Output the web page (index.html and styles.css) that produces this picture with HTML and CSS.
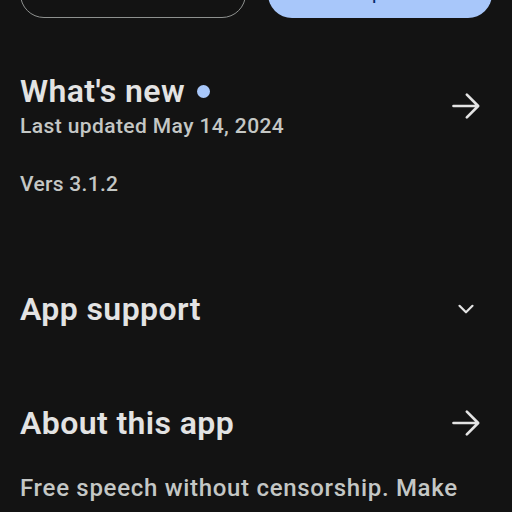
FILE: index.html
```html
<!DOCTYPE html>
<html lang="en">
<head>
  <meta charset="UTF-8">
  <meta name="viewport" content="width=device-width, initial-scale=1.0">
  <title>App details</title>
  <link rel="stylesheet" href="styles.css">
</head>
<body>
  <div class="page">
    <div class="actions">
      <button class="btn btn-outline">Uninstall</button>
      <button class="btn btn-filled">Open</button>
    </div>

    <section class="section whats-new">
      <div class="section-head">
        <div>
          <h2 class="section-title">What's new <span class="dot"></span></h2>
          <div class="section-sub">Last updated May 14, 2024</div>
        </div>
        <svg class="icon arrow" viewBox="0 0 24 24" width="40" height="40">
          <path d="M4.5 12h14.5M12.5 5.2l6.8 6.8-6.8 6.8" />
        </svg>
      </div>
      <p class="version">Vers 3.1.2</p>
    </section>

    <section class="section support">
      <div class="section-head">
        <h2 class="section-title">App support</h2>
        <svg class="icon chevron" viewBox="0 0 24 24" width="24" height="24">
          <path d="M5.5 8.8l6.5 6.5 6.5-6.5" />
        </svg>
      </div>
    </section>

    <section class="section about">
      <div class="section-head">
        <h2 class="section-title">About this app</h2>
        <svg class="icon arrow" viewBox="0 0 24 24" width="40" height="40">
          <path d="M4.5 12h14.5M12.5 5.2l6.8 6.8-6.8 6.8" />
        </svg>
      </div>
      <p class="description">Free speech without censorship. Make your voice heard and connect with people who share your views.</p>
    </section>
  </div>
</body>
</html>
```

FILE: styles.css
```css
body {
  margin: 0;
  background-color: #131313;
  color: #e3e3e3;
  font-family: Roboto, "Noto Sans", sans-serif;
  overflow: hidden;
}

.page {
  padding: 0 20px;
}

.actions {
  display: flex;
  gap: 22px;
  margin-top: -30px;
}

.btn {
  flex: 1;
  height: 48px;
  border-radius: 24px;
  font-family: inherit;
  font-size: 16px;
  font-weight: 500;
}

.btn-outline {
  background: transparent;
  border: 1.5px solid #8e918f;
  color: #a8c7fa;
}

.btn-filled {
  background-color: #a8c7fa;
  border: none;
  color: #062e6f;
}

.section-head {
  display: flex;
  align-items: center;
  justify-content: space-between;
}

.section-title {
  margin: 0;
  font-size: 32px;
  font-weight: 600;
  letter-spacing: 0.4px;
  line-height: 40px;
  display: flex;
  align-items: center;
  gap: 12px;
}

.dot {
  width: 13px;
  height: 13px;
  border-radius: 50%;
  background-color: #a8c7fa;
}

.section-sub {
  font-size: 21px;
  line-height: 30px;
  letter-spacing: 0.4px;
  color: #c4c7c5;
  font-weight: 500;
}

.icon {
  fill: none;
  stroke: #e3e3e3;
  stroke-width: 1.6;
  stroke-linecap: round;
  stroke-linejoin: round;
  margin-right: 6px;
}

.chevron {
  stroke-width: 2.2;
  margin-right: 14px;
}

.whats-new {
  margin-top: 53px;
}

.version {
  margin: 31px 0 0;
  font-size: 21px;
  font-weight: 500;
  letter-spacing: 0.3px;
  color: #c4c7c5;
}

.support {
  margin-top: 93px;
}

.about {
  margin-top: 74px;
}

.description {
  margin: 28px 0 0;
  font-size: 24px;
  line-height: 35px;
  letter-spacing: 0.7px;
  color: #c4c7c5;
  font-weight: 500;
}
```
